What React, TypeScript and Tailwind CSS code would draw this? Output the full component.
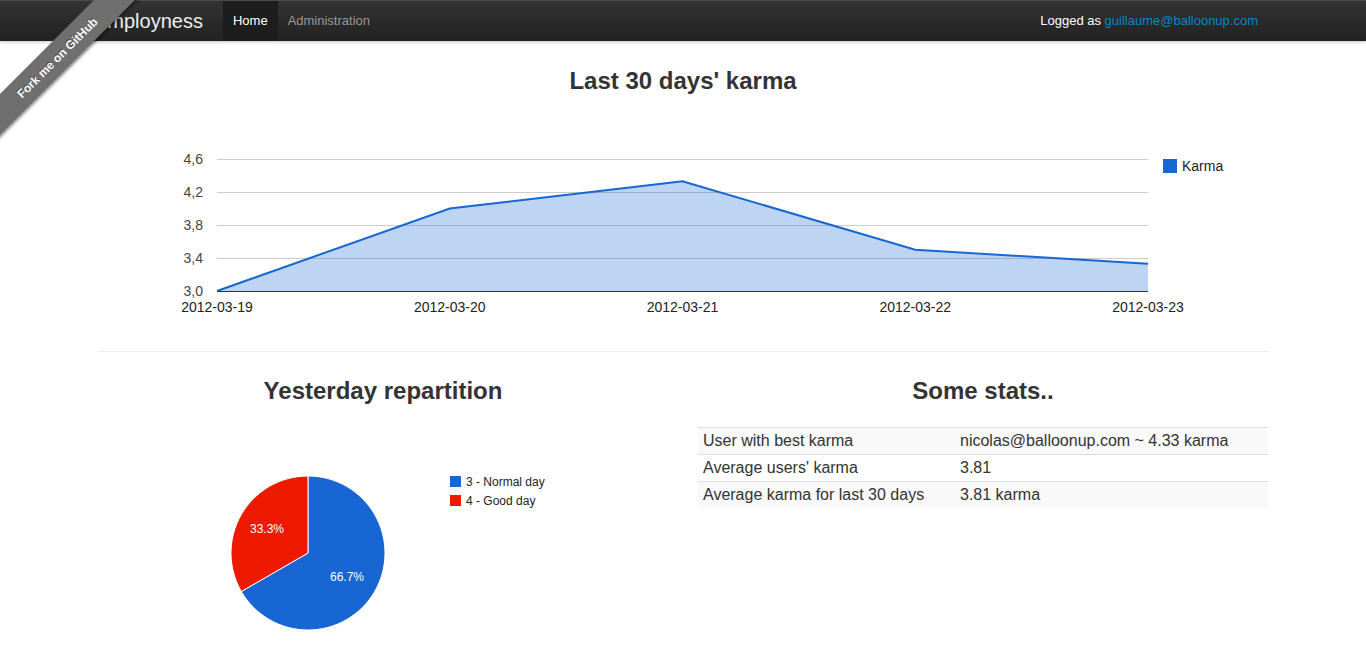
const font = { fontFamily: '"Liberation Sans", Arial, sans-serif' };

const blue = '#1766d3';
const red = '#ee1a00';

const karma = [
  { date: '2012-03-19', value: 3.0 },
  { date: '2012-03-20', value: 4.0 },
  { date: '2012-03-21', value: 4.33 },
  { date: '2012-03-22', value: 3.5 },
  { date: '2012-03-23', value: 3.33 },
];

const stats = [
  ['User with best karma', 'nicolas@balloonup.com ~ 4.33 karma'],
  ["Average users' karma", '3.81'],
  ['Average karma for last 30 days', '3.81 karma'],
];

function Ribbon() {
  return (
    <div className="pointer-events-none absolute left-0 top-0 z-20 h-[150px] w-[150px] overflow-hidden">
      <div className="absolute left-[-73px] top-[43px] flex h-[29px] w-[260px] -rotate-45 items-center justify-center bg-[#6f6f6f] shadow-[0_2px_3px_rgba(0,0,0,0.45)]">
        <span className="text-[12px] font-bold text-white [text-shadow:0_-1px_0_rgba(0,0,0,0.5)]">Fork me on GitHub</span>
      </div>
    </div>
  );
}

function Navbar() {
  return (
    <div className="relative z-10 h-[41px] border-t border-[#4b4b4b] bg-gradient-to-b from-[#333333] to-[#222222] shadow-[0_1px_3px_rgba(0,0,0,0.25)]">
      <div className="mx-auto flex h-full w-[1170px] items-center">
        <div className="ml-[-4px] pr-[20px] text-[20px] text-[#eeeeee]">Employness</div>
        <div className="flex h-full text-[13px]">
          <div className="flex h-full items-center bg-[#1d1d1d] px-[10px] text-white">Home</div>
          <div className="flex h-full items-center px-[10px] text-[#999999]">Administration</div>
        </div>
        <div className="ml-auto mr-[10px] text-[13px] text-white">
          Logged as <span className="text-[#0088cc]">guillaume@balloonup.com</span>
        </div>
      </div>
    </div>
  );
}

function KarmaChart() {
  const left = 119;
  const step = 232.75;
  const base = 191;
  const pxPerUnit = 132 / 1.6;
  const pts = karma.map((d, i) => [left + i * step, base - (d.value - 3) * pxPerUnit]);
  const line = pts.map((p) => p.join(',')).join(' ');
  const area = `${left},${base} ${line} ${left + 4 * step},${base}`;
  const ticks = ['3,0', '3,4', '3,8', '4,2', '4,6'];
  return (
    <svg width={1170} height={251} className="mt-[-2px] block" style={font}>
      {ticks.map((t, i) => {
        const y = base - i * 33;
        return (
          <g key={t}>
            {i > 0 && <line x1={left} x2={left + 4 * step} y1={y + 0.5} y2={y + 0.5} stroke="#cccccc" />}
            <text x={105} y={y} fontSize={14} fill="#444444" textAnchor="end" dominantBaseline="central">
              {t}
            </text>
          </g>
        );
      })}
      <polygon points={area} fill={blue} fillOpacity={0.28} />
      <polyline points={line} fill="none" stroke={blue} strokeWidth={2} />
      <line x1={left} x2={left + 4 * step} y1={base + 0.5} y2={base + 0.5} stroke="#333333" />
      {karma.map((d, i) => (
        <text key={d.date} x={left + i * step} y={207} fontSize={14} fill="#222222" textAnchor="middle" dominantBaseline="central">
          {d.date}
        </text>
      ))}
      <rect x={1065} y={59} width={14} height={14} fill={blue} />
      <text x={1084} y={66} fontSize={14} fill="#222222" dominantBaseline="central">
        Karma
      </text>
    </svg>
  );
}

function PieChart() {
  const cx = 210;
  const cy = 143;
  const r = 77;
  const ex = cx - r * Math.sin(Math.PI / 3);
  const ey = cy + r * Math.cos(Math.PI / 3);
  return (
    <svg width={570} height={237} className="mt-[-1px] block" style={font}>
      <path d={`M${cx},${cy} L${cx},${cy - r} A${r},${r} 0 1 1 ${ex},${ey} Z`} fill={blue} stroke="#ffffff" strokeWidth={1} />
      <path d={`M${cx},${cy} L${ex},${ey} A${r},${r} 0 0 1 ${cx},${cy - r} Z`} fill={red} stroke="#ffffff" strokeWidth={1} />
      <text x={169} y={119} fontSize={12} fill="#ffffff" textAnchor="middle" dominantBaseline="central">
        33.3%
      </text>
      <text x={249} y={167} fontSize={12} fill="#ffffff" textAnchor="middle" dominantBaseline="central">
        66.7%
      </text>
      <rect x={352} y={66} width={11} height={11} fill={blue} />
      <text x={368} y={72} fontSize={12} fill="#222222" dominantBaseline="central">
        3 - Normal day
      </text>
      <rect x={352} y={85} width={11} height={11} fill={red} />
      <text x={368} y={91} fontSize={12} fill="#222222" dominantBaseline="central">
        4 - Good day
      </text>
    </svg>
  );
}

export default function App() {
  return (
    <div className="relative min-h-[647px] bg-white text-[#333333]" style={font}>
      <Ribbon />
      <Navbar />
      <div className="mx-auto w-[1170px]">
        <h2 className="mt-[19px] text-center text-[24px] font-bold leading-[42px]">Last 30 days' karma</h2>
        <KarmaChart />
        <hr className="border-t border-[#eeeeee]" />
        <div className="flex gap-[30px]">
          <div className="w-[570px]">
            <h3 className="mt-[19px] text-center text-[24px] font-bold leading-[40px]">Yesterday repartition</h3>
            <PieChart />
          </div>
          <div className="w-[570px]">
            <h3 className="mt-[19px] text-center text-[24px] font-bold leading-[40px]">Some stats..</h3>
            <table className="mt-[16px] w-full border-collapse text-[16px]">
              <tbody>
                {stats.map(([k, v], i) => (
                  <tr key={k} className={i % 2 === 0 ? 'bg-[#f9f9f9]' : ''}>
                    <td className="h-[27px] w-[262px] border-t border-[#dddddd] px-[5px] align-middle">{k}</td>
                    <td className="h-[27px] border-t border-[#dddddd] px-0 align-middle">{v}</td>
                  </tr>
                ))}
              </tbody>
            </table>
          </div>
        </div>
      </div>
    </div>
  );
}
